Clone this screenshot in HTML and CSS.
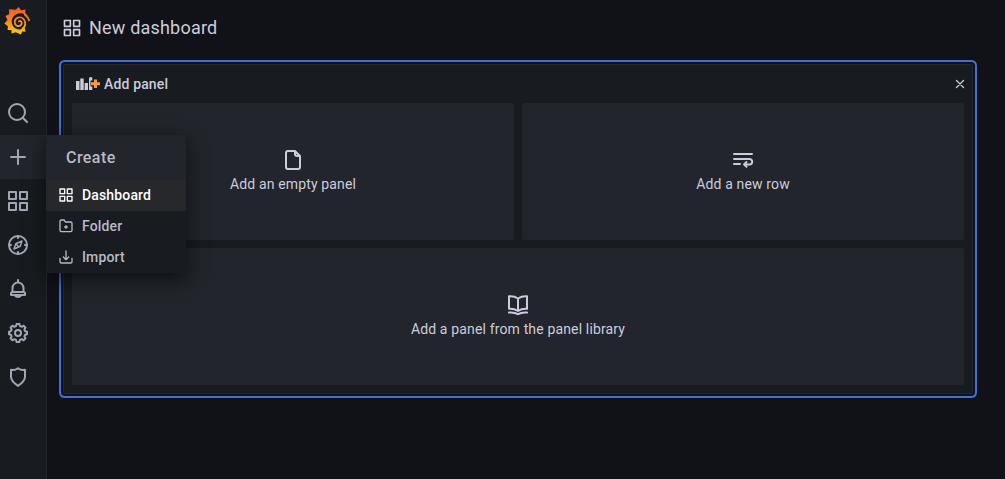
FILE: index.html
```html
<!DOCTYPE html>
<html lang="en">
<head>
<meta charset="utf-8">
<title>New dashboard</title>
<link rel="stylesheet" href="styles.css">
</head>
<body>
<svg class="defs" width="0" height="0">
  <symbol id="apps" viewBox="0 0 24 24"><path d="M3 3h7v7H3zM14 3h7v7h-7zM3 14h7v7H3zM14 14h7v7h-7z"/></symbol>
</svg>
<div class="app">
  <nav class="sidebar">
    <a class="logo"><svg width="26" height="28" viewBox="0 0 26 28">
      <defs><linearGradient id="flame" gradientUnits="userSpaceOnUse" x1="0" y1="0" x2="0" y2="27"><stop offset="0" stop-color="#f05a28"/><stop offset=".45" stop-color="#f58024"/><stop offset="1" stop-color="#fbca0a"/></linearGradient></defs>
      <path fill="url(#flame)" d="M25.500 12.800C25 10 23.400 7.700 21.200 6L21.500 2.400L17.200 3.200L14.600 0L11.700 2.700L5 2.200L5.200 7.200L1.400 9L3.500 13L.4 16.600L3.900 19.200L3.600 23L7.400 22.900L7.500 26.400L11.800 25.200L17 27.400L18.200 24.600L21.600 24.800L20.800 21L22.800 15.500Z"/>
      <path fill="#181b1f" d="M25.500 12.500C24 8.500 20.500 6.200 16.500 6.200C11.500 6.200 7.600 10 7.800 14.800C8 19.500 11.500 22.600 15.500 22.400C19 22.200 21.600 20 22.200 17H26Z"/>
      <path class="swirl" d="M25 13.200C23.900 10.500 22.500 9 20.700 7.800"/>
      <path class="swirl" d="M18.500 21.500C21 19.500 21.800 16.500 20.700 13.800C19.500 10.900 16.500 9.600 13.800 10.700C11 11.900 10 14.700 11.200 17.100C12.300 19.200 14.900 19.700 16.700 18.300C18.200 17.100 18.100 15 16.600 14.200C15.900 13.900 15.300 14 14.900 14.400"/>
    </svg></a>
    <a class="nav-item"><svg class="icon" viewBox="0 0 24 24"><circle cx="11" cy="11" r="8"/><path d="m16.800 16.800 4.200 4.200"/></svg></a>
    <a class="nav-item active"><svg class="icon" viewBox="0 0 24 24"><path d="M12 5v14M5 12h14"/></svg></a>
    <a class="nav-item"><svg class="icon"><use href="#apps"/></svg></a>
    <a class="nav-item"><svg class="icon" viewBox="0 0 24 24"><circle cx="12" cy="12" r="9"/><path d="M12 3v2M12 19v2M3 12h2M19 12h2"/><path class="thin" d="M16 8l-1.800 5.200L8 16l1.800-5.200zM10 11l3 3"/></svg></a>
    <a class="nav-item"><svg class="icon" viewBox="0 0 24 24"><path d="M6.500 14.500v-3.500a5.500 5.500 0 0 1 11 0v3.500M12 5V3M5 18v-1.500q0-1.500 1.500-1.500h11q1.500 0 1.500 1.500V18zM9 18.500a3.300 2.700 0 0 0 6 0"/></svg></a>
    <a class="nav-item"><svg class="icon" viewBox="0 0 24 24"><circle cx="12" cy="12" r="3"/><path d="M10.600 3h2.800l.6 2.100 1.700.7 1.900-1.100 1.900 1.900-1.100 1.900.7 1.700 1.900.6v2.400l-1.900.6-.7 1.700 1.100 1.900-1.900 1.900-1.900-1.100-1.700.7-.6 2.100h-2.800l-.6-2.100-1.700-.7-1.900 1.100-1.900-1.900 1.100-1.900-.7-1.700-1.900-.6v-2.400l1.900-.6.7-1.700-1.100-1.900 1.900-1.900 1.900 1.100 1.700-.7z"/></svg></a>
    <a class="nav-item"><svg class="icon" viewBox="0 0 24 24"><path d="M12 3.200c2.300 1.700 4.300 2 7 1.600v7c0 4-3.300 6.600-7 9.100-3.700-2.500-7-5.100-7-9.100v-7c2.700.4 4.700.1 7-1.600z"/></svg></a>
  </nav>
  <div class="menu">
    <div class="menu-head">Create</div>
    <a class="menu-item current"><svg class="icon small"><use href="#apps"/></svg>Dashboard</a>
    <a class="menu-item"><svg class="icon small" viewBox="0 0 24 24"><path d="M3 5q0-2 2-2h4.500L11 6h8q2 0 2 2v10.500q0 2-2 2H5q-2 0-2-2zM12 11.500v4M10 13.500h4"/></svg>Folder</a>
    <a class="menu-item"><svg class="icon small" viewBox="0 0 24 24"><path d="M3 14v5q0 2 2 2h14q2 0 2-2v-5M12 3v13M8 12l4 4 4-4"/></svg>Import</a>
  </div>
  <main class="main">
    <header class="title"><svg class="icon medium"><use href="#apps"/></svg>New dashboard</header>
    <section class="panel">
      <div class="panel-head">
        <svg class="panel-icon" width="24" height="16" viewBox="0 0 24 16"><path fill="#ccccdc" d="M0 5h3.500v9H0zM4.300 2.500h3.400V14H4.300zM8.600 7h3.400V14H8.600zM13 2q2-2 3.300-.3V4.500h-1.800v6h1.800V14H13z"/><path fill="#ff9830" d="M18 3.500h3v2.800h3v2.900h-3V12h-3V9.200h-3V6.300h3z"/></svg>
        <span>Add panel</span>
        <svg class="icon close" viewBox="0 0 16 16"><path d="m4.500 4.500 7 7M11.500 4.500l-7 7"/></svg>
      </div>
      <div class="tiles">
        <div class="tile"><svg class="icon" viewBox="0 0 24 24"><path d="M14 3H7q-2 0-2 2v14q0 2 2 2h10q2 0 2-2V8zM14 3v3q0 2 2 2h3"/></svg>Add an empty panel</div>
        <div class="tile"><svg class="icon" viewBox="0 0 24 24"><path d="M3 6h18M3 11h15.500a2.700 2.700 0 0 1 0 5.400H14M3 16h6M15.500 14l-2.500 2.400 2.500 2.400"/></svg>Add a new row</div>
        <div class="tile wide"><svg class="icon" viewBox="0 0 24 24"><path d="M12 5.500C9 3.500 6 3 3 3.300v12.500c3-.3 6 .2 9 2.200 3-2 6-2.500 9-2.200V3.300c-3-.3-6 .2-9 2.200zV18M3 19.600c3-.3 6-.1 9 1.600 3-1.700 6-1.900 9-1.600"/></svg>Add a panel from the panel library</div>
      </div>
    </section>
  </main>
</div>
</body>
</html>
```

FILE: styles.css
```css
* { box-sizing: border-box; }
body {
  margin: 0;
  background: #111217;
  color: #ccccdc;
  font: 400 14px/22px Roboto, sans-serif;
  letter-spacing: 0.15px;
}
.defs { position: absolute; }
.app { position: relative; display: flex; height: 479px; overflow: hidden; }
.icon {
  display: block;
  flex: none;
  width: 24px;
  height: 24px;
  fill: none;
  stroke: currentColor;
  stroke-width: 2;
  stroke-linecap: round;
  stroke-linejoin: round;
}
.icon .thin { stroke-width: 1.5; }
.icon.small { width: 16px; height: 16px; }
.icon.medium { width: 20px; height: 20px; }

.sidebar {
  flex: none;
  width: 47px;
  background: #181b1f;
  border-right: 1px solid #25272c;
  color: #9fa7b3;
}
.logo { display: block; height: 91px; padding: 7px 0 0 4px; }
.logo svg { display: block; }
.swirl { fill: none; stroke: url(#flame); stroke-width: 1.8; stroke-linecap: round; }
.nav-item { display: flex; align-items: center; height: 44px; padding-left: 6px; }
.nav-item.active { background: #22252b; }

.menu {
  position: absolute;
  z-index: 2;
  left: 46px;
  top: 135px;
  width: 140px;
  background: #181b1f;
  box-shadow: 0 6px 18px rgba(1, 4, 9, 0.65);
}
.menu-head {
  height: 45px;
  padding-left: 20px;
  background: #22252b;
  font-size: 16px;
  font-weight: 500;
  letter-spacing: 0.45px;
  line-height: 45px;
  color: #b9bac8;
}
.menu-item {
  display: flex;
  align-items: center;
  gap: 8px;
  height: 31px;
  padding: 0 0 1px 12px;
  font-weight: 500;
  letter-spacing: 0.15px;
  color: #b9bac8;
}
.menu-item.current { background: #26282c; color: #fff; }

.main { flex: 1; padding: 0 32px 0 16px; }
.title {
  display: flex;
  align-items: center;
  gap: 7px;
  height: 56px;
  margin-left: -1px;
  font-size: 18px;
  letter-spacing: 0.2px;
}
.panel {
  height: 330px;
  margin-top: 8px;
  padding: 0 8px 8px;
  background: #181b1f;
  border: 1px solid #25272c;
  border-radius: 2px;
  box-shadow: 0 0 0 2px #111217, 0 0 0 4px #3d71d9;
}
.panel-head {
  display: flex;
  align-items: center;
  gap: 4px;
  height: 38px;
  padding-left: 4px;
  font-weight: 500;
}
.close { width: 16px; height: 16px; margin-left: auto; margin-right: -4px; stroke-width: 1.3; }
.tiles {
  display: grid;
  grid-template-columns: 1fr 1fr;
  grid-template-rows: 137px 137px;
  gap: 8px;
}
.tile {
  display: flex;
  flex-direction: column;
  align-items: center;
  justify-content: center;
  gap: 1px;
  border-radius: 2px;
  background: #22252b;
}
.tile.wide { grid-column: 1 / -1; }
```
